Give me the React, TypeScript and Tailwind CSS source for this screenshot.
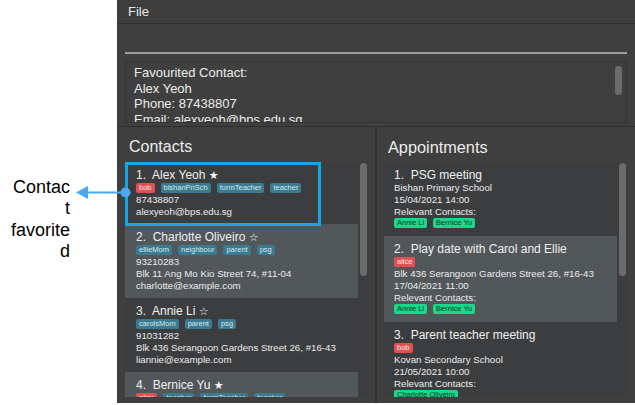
import React from "react";

type Tag = { label: string; red?: boolean };

type Contact = {
  name: string;
  fav: boolean;
  tags: Tag[];
  phone: string;
  address?: string;
  email: string;
};

type Appointment = {
  title: string;
  tags: Tag[];
  location: string;
  time: string;
  contacts: string[];
};

const contacts: Contact[] = [
  {
    name: "Alex Yeoh",
    fav: true,
    tags: [{ label: "bob", red: true }, { label: "bishanPriSch" }, { label: "formTeacher" }, { label: "teacher" }],
    phone: "87438807",
    email: "alexyeoh@bps.edu.sg",
  },
  {
    name: "Charlotte Oliveiro",
    fav: false,
    tags: [{ label: "ellieMom" }, { label: "neighbour" }, { label: "parent" }, { label: "psg" }],
    phone: "93210283",
    address: "Blk 11 Ang Mo Kio Street 74, #11-04",
    email: "charlotte@example.com",
  },
  {
    name: "Annie Li",
    fav: false,
    tags: [{ label: "carolsMom" }, { label: "parent" }, { label: "psg" }],
    phone: "91031282",
    address: "Blk 436 Serangoon Gardens Street 26, #16-43",
    email: "liannie@example.com",
  },
  {
    name: "Bernice Yu",
    fav: true,
    tags: [{ label: "alice", red: true }, { label: "teacher" }, { label: "formTeacher" }, { label: "teacher" }],
    phone: "99272758",
    address: "Blk 30 Lorong 3 Serangoon Gardens, #07-18",
    email: "berniceyu@example.com",
  },
];

const appointments: Appointment[] = [
  {
    title: "PSG meeting",
    tags: [],
    location: "Bishan Primary School",
    time: "15/04/2021 14:00",
    contacts: ["Annie Li", "Bernice Yu"],
  },
  {
    title: "Play date with Carol and Ellie",
    tags: [{ label: "alice", red: true }],
    location: "Blk 436 Serangoon Gardens Street 26, #16-43",
    time: "17/04/2021 11:00",
    contacts: ["Annie Li", "Bernice Yu"],
  },
  {
    title: "Parent teacher meeting",
    tags: [{ label: "bob", red: true }],
    location: "Kovan Secondary School",
    time: "21/05/2021 10:00",
    contacts: ["Charlotte Oliveiro"],
  },
];

const TagChip = ({ tag }: { tag: Tag }) => (
  <span
    className={`h-[10px] rounded-[2px] px-[3px] text-[7.5px] leading-[10px] ${
      tag.red ? "bg-[#e04f52] text-[#fbe9e9]" : "bg-[#3b7a8f] text-[#d4e6ec]"
    }`}
  >
    {tag.label}
  </span>
);

const ContactCard = ({ c, i }: { c: Contact; i: number }) => (
  <div className={`pb-[6px] pl-[11px] pt-[6px] ${i % 2 ? "bg-[#52575a]" : "bg-[#3b3d3f]"}`}>
    <div className="h-[14px] whitespace-pre text-[12px] leading-[14px] text-[#f0f0f0]">
      {`${i + 1}.  ${c.name} `}
      <span className="font-['DejaVu_Sans'] text-[11px]">{c.fav ? "★" : "☆"}</span>
    </div>
    <div className="mt-[1px] flex gap-[6px]">
      {c.tags.map((t, k) => (
        <TagChip key={k} tag={t} />
      ))}
    </div>
    <div className="mt-[1px] text-[9.7px] leading-[12px] text-[#ececec]">
      <div>{c.phone}</div>
      {c.address && <div>{c.address}</div>}
      <div>{c.email}</div>
    </div>
  </div>
);

const AppointmentCard = ({ a, i }: { a: Appointment; i: number }) => (
  <div className={`pb-[8px] pl-[10px] pt-[6px] ${i % 2 ? "bg-[#52575a]" : "bg-[#3b3d3f]"}`}>
    <div className="h-[14px] whitespace-pre text-[12px] leading-[14px] text-[#f0f0f0]">{`${i + 1}.  ${a.title}`}</div>
    {a.tags.length > 0 && (
      <div className="my-[1px] flex gap-[6px]">
        {a.tags.map((t, k) => (
          <TagChip key={k} tag={t} />
        ))}
      </div>
    )}
    <div className="text-[9.7px] leading-[12px] text-[#ececec]">
      <div>{a.location}</div>
      <div>{a.time}</div>
      <div>Relevant Contacts:</div>
    </div>
    <div className="flex gap-[6px]">
      {a.contacts.map((n) => (
        <span key={n} className="h-[10px] rounded-[2px] bg-[#18d98b] px-[3px] text-[7.5px] leading-[10px] text-[#10301f]">
          {n}
        </span>
      ))}
    </div>
  </div>
);

const Scrollbar = ({ pad }: { pad: string }) => (
  <div className={`shrink-0 pt-[1px] ${pad}`}>
    <div className="h-[113px] w-[7px] rounded-full bg-[#6b6b6b]" />
  </div>
);

export default function App() {
  return (
    <div className="relative flex h-[405px] w-[635px] overflow-hidden bg-white font-['Liberation_Sans',Arial,sans-serif]">
      {/* annotation */}
      <div className="w-[117px] shrink-0 pt-[177px]">
        <div className="ml-[10px] w-[60px] text-right text-[18px] leading-[21.3px] text-black">
          <div>Contac</div>
          <div>t</div>
          <div>favorite</div>
          <div>d</div>
        </div>
      </div>

      {/* app window */}
      <div className="flex h-[403px] w-[518px] shrink-0 flex-col bg-[#3f3f3f] text-[#e8e8e8]">
        <div className="h-[24px] border-b border-[#2e2e2e] bg-[#3d3d3d] pl-[11px] text-[13px] leading-[23px]">File</div>

        <div className="mx-[8px] h-[30px] border-b-2 border-[#9c9c9c]" />

        <div className="mx-[8px] mt-[7px] flex h-[62px] border border-[#353535] bg-[#3f3f3f]">
          <div className="flex-1 overflow-hidden pl-[8px] pt-[3px] text-[13px] leading-[15.5px] text-[#ececec]">
            <div>Favourited Contact:</div>
            <div>Alex Yeoh</div>
            <div>Phone: 87438807</div>
            <div>Email: alexyeoh@bps.edu.sg</div>
          </div>
          <div className="w-[11px] shrink-0 pt-[4px]">
            <div className="h-[29px] w-[7px] rounded-full bg-[#6b6b6b]" />
          </div>
        </div>

        <div className="mt-[3px] h-[1px] bg-[#2e2e2e]" />

        <div className="flex flex-1">
          {/* contacts pane */}
          <div className="flex w-[258px] flex-col">
            <div className="h-[35px] pl-[12px] pt-[9px] text-[16px] leading-[22px] text-[#ececec]">Contacts</div>
            <div className="ml-[8px] flex h-[235px] w-[242px] bg-[#3b3d3f]">
              <div className="w-[233px] overflow-hidden">
                {contacts.map((c, i) => (
                  <ContactCard key={c.name} c={c} i={i} />
                ))}
              </div>
              <Scrollbar pad="pl-[2px]" />
            </div>
          </div>

          <div className="w-[2px] bg-[#2f2f2f]" />

          {/* appointments pane */}
          <div className="flex w-[258px] flex-col">
            <div className="h-[35px] pl-[11px] pt-[9px] text-[16.3px] leading-[22px] text-[#ececec]">Appointments</div>
            <div className="ml-[7px] flex h-[235px] w-[243px] bg-[#3b3d3f]">
              <div className="w-[233px] overflow-hidden">
                {appointments.map((a, i) => (
                  <AppointmentCard key={a.title} a={a} i={i} />
                ))}
              </div>
              <Scrollbar pad="pl-[2px]" />
            </div>
          </div>
        </div>
      </div>

      {/* highlight box and arrow */}
      <div className="absolute left-[125px] top-[162px] h-[64px] w-[196px] border-[3px] border-[#14a6ea]" />
      <svg className="absolute left-[70px] top-[180px]" width="62" height="26" viewBox="0 0 62 26">
        <line x1="16" y1="12.5" x2="55" y2="12.5" stroke="#4aa8f0" strokeWidth="2" />
        <polygon points="6,12.5 18,6 18,19" fill="#4aa8f0" />
        <circle cx="55.5" cy="12.5" r="5" fill="#4aa8f0" />
      </svg>
    </div>
  );
}
